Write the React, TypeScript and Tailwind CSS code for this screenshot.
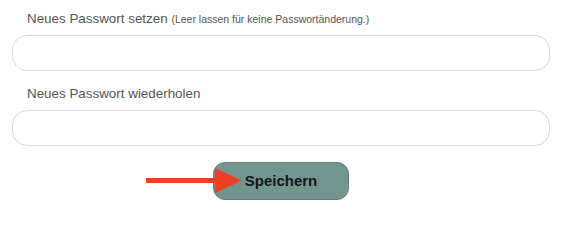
export default function App() {
  return (
    <div
      className="relative w-[567px] h-[209px] bg-white overflow-hidden"
      style={{ fontFamily: '"Liberation Sans", Arial, Helvetica, sans-serif' }}
    >
      <div className="pl-[12px] pr-[17px] pt-[11px]">
        <label className="block pl-[15px] text-[13.4px] leading-[16px] text-[#555555] mb-[8px]">
          Neues Passwort setzen{" "}
          <span className="text-[10.5px] text-[#555555]">(Leer lassen für keine Passwortänderung.)</span>
        </label>
        <input
          type="password"
          className="block w-[538px] h-[36px] rounded-[15px] border border-[#d5d8de] bg-white outline-none"
        />
        <label className="block mt-[15px] pl-[15px] text-[13.4px] leading-[16px] text-[#555555] mb-[8px]">
          Neues Passwort wiederholen
        </label>
        <input
          type="password"
          className="block w-[538px] h-[36px] rounded-[15px] border border-[#d5d8de] bg-white outline-none"
        />
        <div className="mt-[16px] pl-[201px]">
          <button className="w-[136px] h-[38px] rounded-[12px] border border-[#5f827c] bg-[#72968f] text-[15px] font-bold text-[#161616]">
            Speichern
          </button>
        </div>
      </div>
      <svg
        className="absolute left-[146px] top-[167px]"
        width="98"
        height="27"
        viewBox="0 0 98 27"
      >
        <rect x="0" y="11" width="72" height="5" fill="#ee3f24" />
        <polygon points="69,1 96,13.5 69,26" fill="#ee3f24" />
      </svg>
    </div>
  );
}
